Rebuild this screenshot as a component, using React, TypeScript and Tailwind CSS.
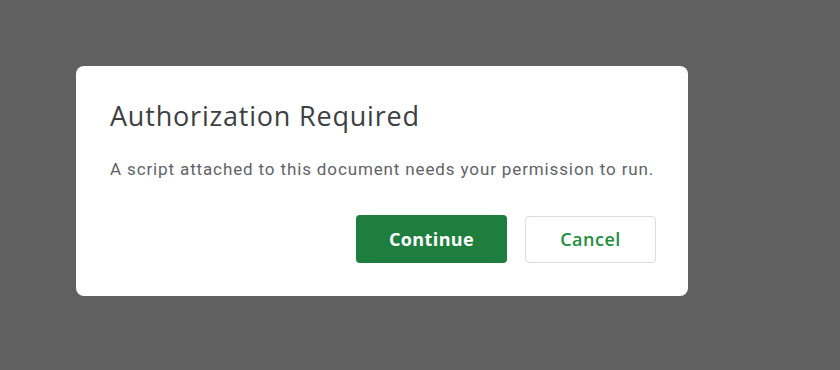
export default function App() {
    return (
        <div className="w-[840px] h-[370px] bg-[#606060] pt-[66px] pl-[76px] font-['Roboto','Open_Sans',sans-serif]">
            <div className="w-[612px] h-[230px] bg-white rounded-lg pl-[34px] pr-[32px] pt-[30px] flex flex-col">
                <h1 className="text-[27px] leading-[40px] tracking-[0.8px] text-[#3c4043] font-normal font-['Open_Sans','Roboto',sans-serif]">
                    Authorization Required
                </h1>
                <p className="mt-[21px] text-[17px] leading-[24px] tracking-[0.87px] whitespace-nowrap text-[#5f6368]">
                    A script attached to this document needs your permission to run.
                </p>
                <div className="mt-[34px] flex justify-end gap-[18px]">
                    <button className="w-[151px] h-[48px] rounded bg-[#1e7e3e] text-white text-[18px] tracking-[0.4px] font-bold font-['Open_Sans',sans-serif]">
                        Continue
                    </button>
                    <button className="w-[131px] h-[47px] mt-px rounded border border-[#dadce0] bg-white text-[#1e8e3e] text-[18px] tracking-[0.5px] font-semibold font-['Open_Sans',sans-serif]">
                        Cancel
                    </button>
                </div>
            </div>
        </div>
    );
}
